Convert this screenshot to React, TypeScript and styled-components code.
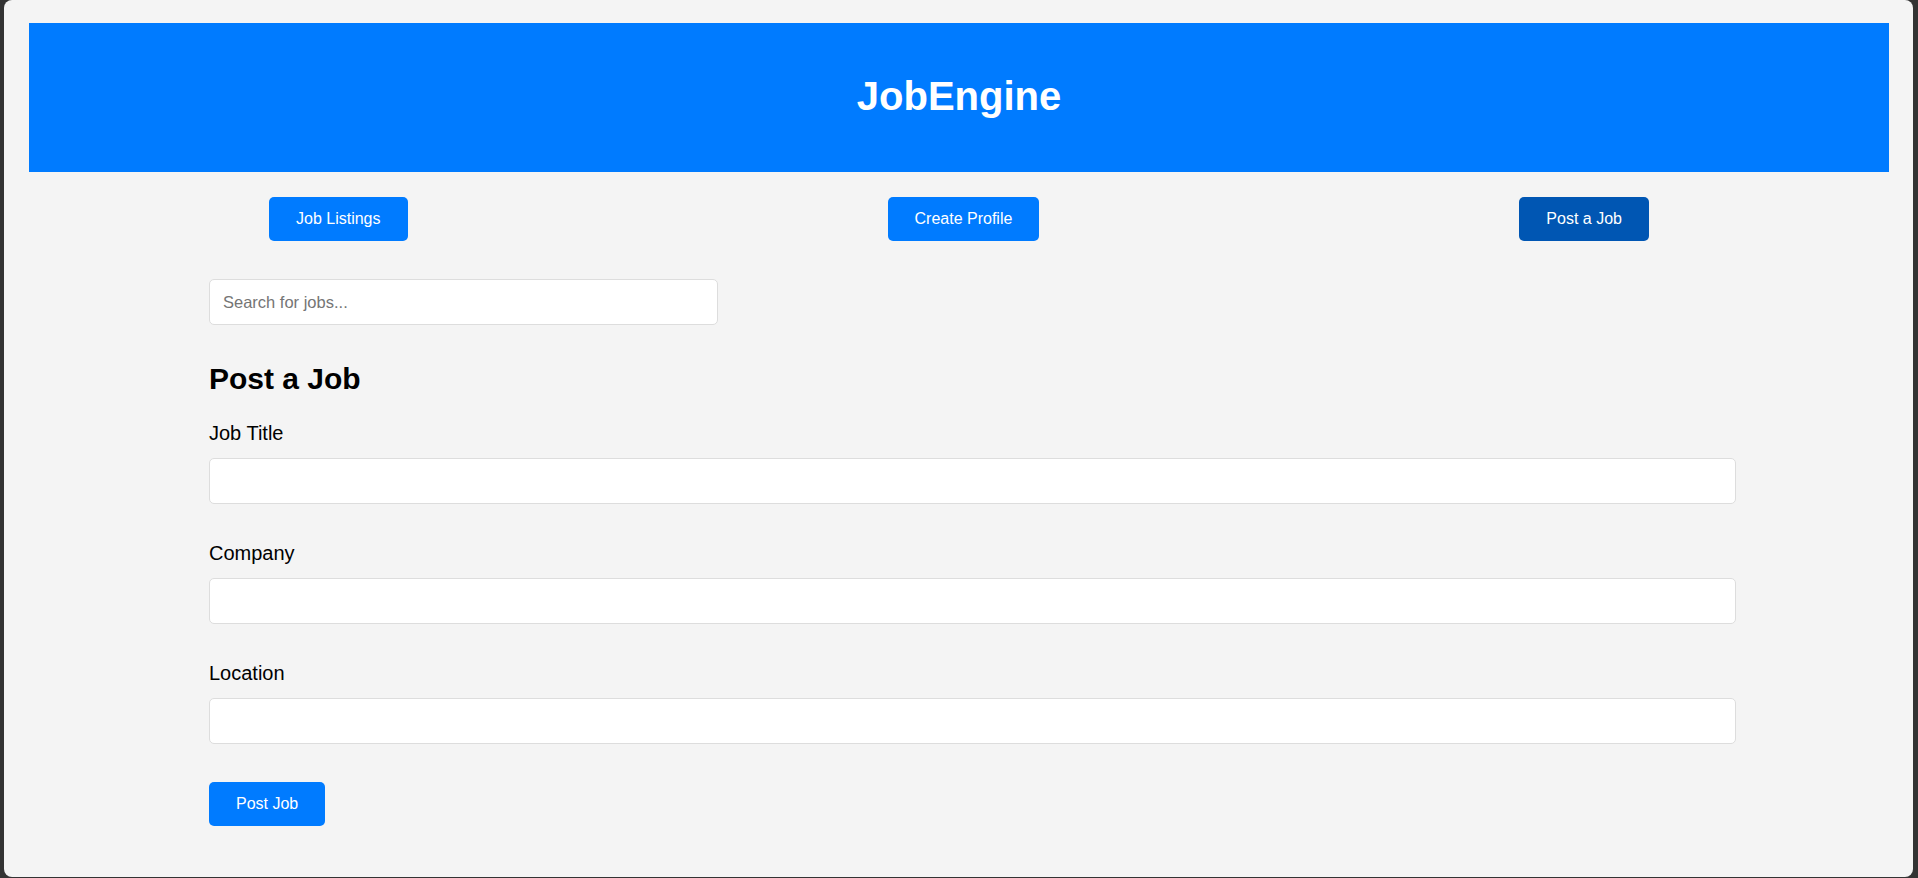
import React from "react";
import styled, { createGlobalStyle } from "styled-components";

const GlobalStyle = createGlobalStyle`
  html, body {
    margin: 0;
    padding: 0;
    background: #333333;
    font-family: "Liberation Sans", Arial, sans-serif;
  }
  * { box-sizing: border-box; }
`;

const Window = styled.div`
  margin: 0 5px 0 4px;
  height: 877px;
  background: #f4f4f4;
  border-radius: 8px;
  padding: 23px 24px 0 25px;
  overflow: hidden;
`;

const Header = styled.header`
  height: 149px;
  background: #007bff;
  color: #ffffff;
  display: flex;
  align-items: center;
  justify-content: center;
  padding-bottom: 4px;
`;

const Title = styled.h1`
  margin: 0;
  font-size: 40px;
  line-height: 46px;
  font-weight: 700;
`;

const Nav = styled.nav`
  margin-top: 25px;
  display: flex;
  justify-content: space-around;
`;

const Button = styled.button<{ $active?: boolean }>`
  height: 44px;
  padding: 0 27px;
  border: none;
  border-radius: 5px;
  background: ${(p) => (p.$active ? "#0056b3" : "#007bff")};
  color: #ffffff;
  font-family: "Liberation Sans", Arial, sans-serif;
  font-size: 16px;
  cursor: pointer;
`;

const Content = styled.main`
  margin-left: 180px;
  width: 1527px;
  padding-top: 38px;
`;

const SearchInput = styled.input`
  display: block;
  width: 509px;
  height: 46px;
  padding: 0 13px;
  border: 1px solid #dddddd;
  border-radius: 5px;
  background: #ffffff;
  font-family: "Liberation Sans", Arial, sans-serif;
  font-size: 16.5px;
  margin-bottom: 37px;
  &::placeholder { color: #757575; }
`;

const Heading = styled.h2`
  margin: 0 0 26px;
  font-size: 30px;
  line-height: 34px;
  font-weight: 700;
  color: #000000;
`;

const Field = styled.div`
  display: flex;
  flex-direction: column;
  gap: 14px;
  margin-bottom: 38px;
`;

const Label = styled.label`
  font-size: 20px;
  line-height: 22px;
  color: #000000;
`;

const TextInput = styled.input`
  width: 100%;
  height: 46px;
  padding: 0 13px;
  border: 1px solid #dddddd;
  border-radius: 5px;
  background: #ffffff;
  font-family: "Liberation Sans", Arial, sans-serif;
  font-size: 16.5px;
`;

const fields = ["Job Title", "Company", "Location"];

export default function App() {
  return (
    <>
      <GlobalStyle />
      <Window>
        <Header>
          <Title>JobEngine</Title>
        </Header>
        <Nav>
          <Button>Job Listings</Button>
          <Button>Create Profile</Button>
          <Button $active>Post a Job</Button>
        </Nav>
        <Content>
          <SearchInput placeholder="Search for jobs..." />
          <Heading>Post a Job</Heading>
          {fields.map((f) => (
            <Field key={f}>
              <Label>{f}</Label>
              <TextInput />
            </Field>
          ))}
          <Button>Post Job</Button>
        </Content>
      </Window>
    </>
  );
}
